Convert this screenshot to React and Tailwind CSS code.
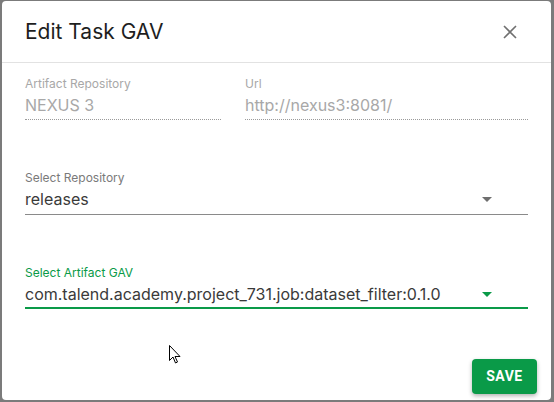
const Field = ({ label, value, variant = 'normal', className = '' }) => {
  const disabled = variant === 'disabled'
  const active = variant === 'active'
  return (
    <div className={className}>
      <div
        className={`h-[14px] text-[12px] leading-[14px] ${
          disabled ? 'text-[#a8a8a8]' : active ? 'text-[#0a9a48]' : 'text-[#7a7a7a]'
        }`}
      >
        {label}
      </div>
      <div
        className={`flex items-center justify-between mt-[4px] ${
          disabled
            ? 'border-b border-dotted border-[#9a9a9a] pb-[4px]'
            : active
            ? 'border-b-2 border-[#0a9a48] pb-[3px]'
            : 'border-b border-[#8a8a8a] pb-[5px] mt-[3px]'
        }`}
      >
        <span
          className={`h-[20px] text-[16px] leading-[20px] ${
            disabled ? 'text-[#a8a8a8]' : 'text-[#3a3a3a]'
          }`}
        >
          {value}
        </span>
        {!disabled && (
          <svg width="10" height="5" viewBox="0 0 10 5" className="mr-[36px]">
            <path d="M0 0h10L5 5z" fill={active ? '#0a9a48' : '#6e6e6e'} />
          </svg>
        )}
      </div>
    </div>
  )
}

export default function App() {
  return (
    <div
      className="relative w-[554px] h-[402px] bg-[#7b7b7b] pl-[2px] pt-[1px] pr-[3px] pb-[2px]"
      style={{ fontFamily: 'Inter, "Noto Sans", sans-serif' }}
    >
      <div className="flex flex-col h-full bg-white rounded-[4px]">
        <div className="flex items-center justify-between h-[62px] px-[23px] border-b border-[#e2e2e2]">
          <h1 className="text-[21px] text-[#1e1e1e] font-normal">Edit Task GAV</h1>
          <svg width="14" height="14" viewBox="0 0 14 14" className="mr-[11px]">
            <path d="M1 1l12 12M13 1L1 13" stroke="#707070" strokeWidth="1.6" />
          </svg>
        </div>

        <div className="flex flex-col px-[23px] pt-[14px]">
          <div className="flex gap-[24px]">
            <Field className="w-[196px]" label="Artifact Repository" value="NEXUS 3" variant="disabled" />
            <Field className="flex-1" label="Url" value="http://nexus3:8081/" variant="disabled" />
          </div>
          <Field className="mt-[51px]" label="Select Repository" value="releases" />
          <Field
            className="mt-[51px]"
            label="Select Artifact GAV"
            value="com.talend.academy.project_731.job:dataset_filter:0.1.0"
            variant="active"
          />
        </div>

        <div className="flex justify-end pr-[14px] mt-[50px]">
          <button
            className="w-[65px] h-[35px] rounded-[4px] bg-[#0a9a48] text-white text-[14px] font-bold tracking-[0.5px] shadow-[0_2px_4px_rgba(0,0,0,0.3)]"
            style={{ fontFamily: 'Roboto, "Liberation Sans", sans-serif' }}
          >
            SAVE
          </button>
        </div>
      </div>

      <svg className="absolute left-[169px] top-[345px]" width="12" height="20" viewBox="0 0 12 20">
        <path d="M0.5 0.5v15l3.5-3.5 2.5 6 2-1-2.5-5.5h5z" fill="white" stroke="black" strokeWidth="1" strokeLinejoin="round" />
      </svg>
    </div>
  )
}
